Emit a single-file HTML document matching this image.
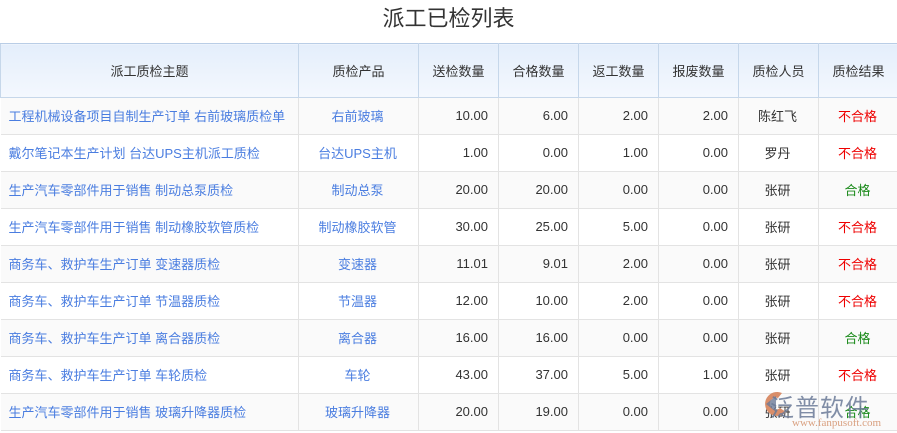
<!DOCTYPE html>
<html><head><meta charset="utf-8"><style>
body{margin:0;width:897px;height:433px;overflow:hidden;background:#fff;font-family:"Liberation Sans","Noto Sans CJK SC",sans-serif;font-size:13px;color:#333;position:relative}
h1{margin:0;height:44px;line-height:37px;text-align:center;font-weight:normal;font-size:22px;color:#333}
table{border-collapse:collapse;table-layout:fixed;width:898px;position:absolute;top:43px;left:0}
th{height:53px;font-weight:normal;background:linear-gradient(#e4eefb,#f4f8fe);border:1px solid #c6d7ea;border-top:1px solid #b9cde6;padding:0}
td{height:34px;border:1px solid #e3e3e3;padding:0 10px 2px 8px;white-space:nowrap;overflow:hidden}
tr:nth-child(even) td{background:#fafafa}
.l{color:#4a7de0}.c{text-align:center}.r{text-align:right}
.bad{color:#e00;text-align:center}.ok{color:#1a8a1a;text-align:center}
td:first-child{border-left:none}
.wm{position:absolute;left:770px;top:388px;font-size:24px;color:#6b7b98;letter-spacing:1px;opacity:.85}
.wm2{position:absolute;left:792px;top:417px;font-size:11px;color:#d9a080;font-family:"Liberation Serif",serif}
</style></head><body>
<h1>派工已检列表</h1>
<table>
<colgroup><col style="width:298px"><col style="width:120px"><col style="width:80px"><col style="width:80px"><col style="width:80px"><col style="width:80px"><col style="width:80px"><col style="width:80px"></colgroup>
<tr><th>派工质检主题</th><th>质检产品</th><th>送检数量</th><th>合格数量</th><th>返工数量</th><th>报废数量</th><th>质检人员</th><th>质检结果</th></tr>
<tr><td class="l">工程机械设备项目自制生产订单 右前玻璃质检单</td><td class="l c">右前玻璃</td><td class="r">10.00</td><td class="r">6.00</td><td class="r">2.00</td><td class="r">2.00</td><td class="c">陈红飞</td><td class="bad">不合格</td></tr>
<tr><td class="l">戴尔笔记本生产计划 台达UPS主机派工质检</td><td class="l c">台达UPS主机</td><td class="r">1.00</td><td class="r">0.00</td><td class="r">1.00</td><td class="r">0.00</td><td class="c">罗丹</td><td class="bad">不合格</td></tr>
<tr><td class="l">生产汽车零部件用于销售 制动总泵质检</td><td class="l c">制动总泵</td><td class="r">20.00</td><td class="r">20.00</td><td class="r">0.00</td><td class="r">0.00</td><td class="c">张研</td><td class="ok">合格</td></tr>
<tr><td class="l">生产汽车零部件用于销售 制动橡胶软管质检</td><td class="l c">制动橡胶软管</td><td class="r">30.00</td><td class="r">25.00</td><td class="r">5.00</td><td class="r">0.00</td><td class="c">张研</td><td class="bad">不合格</td></tr>
<tr><td class="l">商务车、救护车生产订单 变速器质检</td><td class="l c">变速器</td><td class="r">11.01</td><td class="r">9.01</td><td class="r">2.00</td><td class="r">0.00</td><td class="c">张研</td><td class="bad">不合格</td></tr>
<tr><td class="l">商务车、救护车生产订单 节温器质检</td><td class="l c">节温器</td><td class="r">12.00</td><td class="r">10.00</td><td class="r">2.00</td><td class="r">0.00</td><td class="c">张研</td><td class="bad">不合格</td></tr>
<tr><td class="l">商务车、救护车生产订单 离合器质检</td><td class="l c">离合器</td><td class="r">16.00</td><td class="r">16.00</td><td class="r">0.00</td><td class="r">0.00</td><td class="c">张研</td><td class="ok">合格</td></tr>
<tr><td class="l">商务车、救护车生产订单 车轮质检</td><td class="l c">车轮</td><td class="r">43.00</td><td class="r">37.00</td><td class="r">5.00</td><td class="r">1.00</td><td class="c">张研</td><td class="bad">不合格</td></tr>
<tr><td class="l">生产汽车零部件用于销售 玻璃升降器质检</td><td class="l c">玻璃升降器</td><td class="r">20.00</td><td class="r">19.00</td><td class="r">0.00</td><td class="r">0.00</td><td class="c">张研</td><td class="ok">合格</td></tr>
</table>
<svg style="position:absolute;left:762px;top:390px" width="28" height="28" viewBox="0 0 28 28"><path d="M20 3 A12 12 0 1 0 24 22 L18 18 A6 6 0 1 1 16 8 Z" fill="#d98e6a"/><path d="M14 6 L4 14 L14 22 Z" fill="#6b7b98" opacity=".8"/></svg>
<div class="wm">泛普软件</div>
<div class="wm2">www.fanpusoft.com</div>
</body></html>
